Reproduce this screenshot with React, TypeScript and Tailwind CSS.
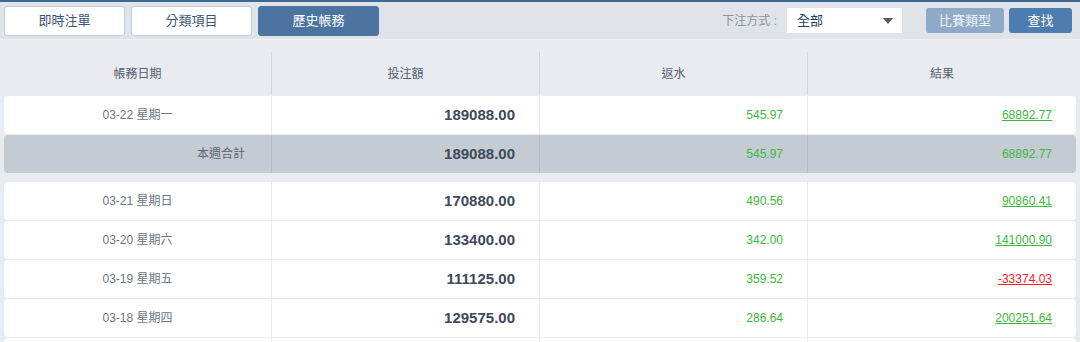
import React from "react";

const FONT = '"Liberation Sans", Arial, "Noto Sans CJK TC", sans-serif';

type Row = { date: string; day: string; bet: string; rebate: string; result: string; neg?: boolean };

const rows: Row[] = [
  { date: "03-21", day: "星期日", bet: "170880.00", rebate: "490.56", result: "90860.41" },
  { date: "03-20", day: "星期六", bet: "133400.00", rebate: "342.00", result: "141000.90" },
  { date: "03-19", day: "星期五", bet: "111125.00", rebate: "359.52", result: "-33374.03", neg: true },
  { date: "03-18", day: "星期四", bet: "129575.00", rebate: "286.64", result: "200251.64" },
];

function DataRow({ r }: { r: Row }) {
  return (
    <div className="grid grid-cols-4 h-[38px] bg-white rounded-[4px] mb-px items-stretch">
      <div className="flex items-center justify-center border-r border-[#e9ecef] text-[12px] text-[#6b7684]">
        {r.date} {r.day}
      </div>
      <div className="flex items-center justify-end pr-6 border-r border-[#e9ecef] text-[15px] font-bold text-[#3e4a5a]">
        {r.bet}
      </div>
      <div className="flex items-center justify-end pr-6 border-r border-[#e9ecef] text-[12px] text-[#3cb83c]">
        {r.rebate}
      </div>
      <div
        className={
          r.neg
            ? "flex items-center justify-end pr-6 text-[12px] text-[#ff2020] underline"
            : "flex items-center justify-end pr-6 text-[12px] text-[#3cb83c] underline"
        }
      >
        {r.result}
      </div>
    </div>
  );
}

export default function App() {
  return (
    <div className="w-[1080px] h-[342px] overflow-hidden bg-[#e8ebef]" style={{ fontFamily: FONT }}>
      <div className="h-[2px] bg-[#3d6894]" />
      <div className="h-[38px] bg-[#e0e4e9] border-b border-[#eef0f3] flex items-center pl-1 pr-2">
        <div className="flex gap-[6px]">
          <button className="w-[121px] h-[30px] bg-white border border-[#c5cdd7] rounded-[3px] text-[13px] text-[#3b5578]">
            即時注單
          </button>
          <button className="w-[121px] h-[30px] bg-white border border-[#c5cdd7] rounded-[3px] text-[13px] text-[#3b5578]">
            分類項目
          </button>
          <button className="w-[121px] h-[30px] bg-[#4b74a0] border border-[#4b74a0] rounded-[3px] text-[13px] text-white">
            歷史帳務
          </button>
        </div>
        <div className="ml-auto flex items-center">
          <span className="text-[12px] text-[#8b939c] mr-[10px]">下注方式 :</span>
          <div className="w-[115px] h-[25px] bg-white flex items-center pl-[10px] pr-[9px] text-[13px] text-[#1f3d66]">
            <span>全部</span>
            <svg className="ml-auto" width="10" height="6" viewBox="0 0 10 6">
              <path d="M0 0 H10 L5 6 Z" fill="#555b63" />
            </svg>
          </div>
          <button className="ml-6 w-[78px] h-[25px] bg-[#8eaac8] rounded-[3px] text-[13px] text-[#eef3f8]">
            比賽類型
          </button>
          <button className="ml-[5px] w-[63px] h-[25px] bg-[#4d7db0] rounded-[3px] text-[13px] text-white">
            查找
          </button>
        </div>
      </div>

      <div className="px-1 pt-3">
        <div className="grid grid-cols-4 h-[43px] text-[12px] text-[#56606c]">
          <div className="flex items-center justify-center border-r border-[#d3d8de]">帳務日期</div>
          <div className="flex items-center justify-center border-r border-[#d3d8de]">投注額</div>
          <div className="flex items-center justify-center border-r border-[#d3d8de]">返水</div>
          <div className="flex items-center justify-center">結果</div>
        </div>

        <div className="mt-px">
          <DataRow r={{ date: "03-22", day: "星期一", bet: "189088.00", rebate: "545.97", result: "68892.77" }} />
          <div className="grid grid-cols-4 h-[38px] bg-[#c4cbd3] rounded-[4px]">
            <div className="flex items-center justify-end pr-[26px] border-r border-[#b3bbc4] text-[12px] text-[#5b6673]">
              本週合計
            </div>
            <div className="flex items-center justify-end pr-6 border-r border-[#b3bbc4] text-[15px] font-bold text-[#3e4a5a]">
              189088.00
            </div>
            <div className="flex items-center justify-end pr-6 border-r border-[#b3bbc4] text-[12px] text-[#3cb83c]">
              545.97
            </div>
            <div className="flex items-center justify-end pr-6 text-[12px] text-[#3cb83c]">68892.77</div>
          </div>
        </div>

        <div className="mt-[9px]">
          {rows.map((r) => (
            <DataRow key={r.date} r={r} />
          ))}
          <div className="grid grid-cols-4 h-[38px] bg-white rounded-[4px]">
            <div className="border-r border-[#e9ecef]" />
            <div className="border-r border-[#e9ecef]" />
            <div className="border-r border-[#e9ecef]" />
            <div />
          </div>
        </div>
      </div>
    </div>
  );
}
